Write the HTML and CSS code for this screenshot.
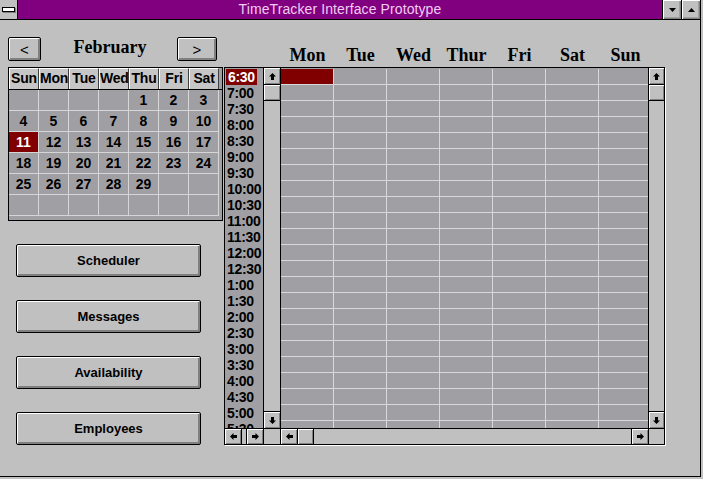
FILE: index.html
```html
<!DOCTYPE html>
<html>
<head>
<meta charset="utf-8">
<title>TimeTracker Interface Prototype</title>
<link rel="stylesheet" href="styles.css">
</head>
<body>
<div class="window">
  <div class="titlebar">
    <div class="sysbox"><span class="sysbar"></span></div>
    <div class="title">TimeTracker Interface Prototype</div>
    <div class="tbtn"><svg width="7" height="4" viewBox="0 0 7 4"><path d="M0 0H7L3.5 4Z"/></svg></div>
    <div class="tbtn"><svg width="7" height="4" viewBox="0 0 7 4"><path d="M0 4H7L3.5 0Z"/></svg></div>
  </div>
  <div class="client">
    <div class="leftcol">
      <div class="monthnav">
        <button class="navbtn prev">&lt;</button>
        <div class="month">February</div>
        <button class="navbtn next">&gt;</button>
      </div>
      <div class="cal">
        <div class="calhead"><span>Sun</span><span>Mon</span><span>Tue</span><span>Wed</span><span>Thu</span><span>Fri</span><span>Sat</span></div>
        <div class="calrow"><span></span><span></span><span></span><span></span><span>1</span><span>2</span><span>3</span></div>
        <div class="calrow"><span>4</span><span>5</span><span>6</span><span>7</span><span>8</span><span>9</span><span>10</span></div>
        <div class="calrow"><span class="sel">11</span><span>12</span><span>13</span><span>14</span><span>15</span><span>16</span><span>17</span></div>
        <div class="calrow"><span>18</span><span>19</span><span>20</span><span>21</span><span>22</span><span>23</span><span>24</span></div>
        <div class="calrow"><span>25</span><span>26</span><span>27</span><span>28</span><span>29</span><span></span><span></span></div>
        <div class="calrow"><span></span><span></span><span></span><span></span><span></span><span></span><span></span></div>
      </div>
      <div class="actions">
        <button class="pbtn">Scheduler</button>
        <button class="pbtn">Messages</button>
        <button class="pbtn">Availability</button>
        <button class="pbtn">Employees</button>
      </div>
    </div>
    <div class="rightcol">
      <div class="dayhead"><span>Mon</span><span>Tue</span><span>Wed</span><span>Thur</span><span>Fri</span><span>Sat</span><span>Sun</span></div>
      <div class="panel">
        <div class="times">
          <div class="t"><span class="on">6:30</span></div>
          <div class="t">7:00</div>
          <div class="t">7:30</div>
          <div class="t">8:00</div>
          <div class="t">8:30</div>
          <div class="t">9:00</div>
          <div class="t">9:30</div>
          <div class="t">10:00</div>
          <div class="t">10:30</div>
          <div class="t">11:00</div>
          <div class="t">11:30</div>
          <div class="t">12:00</div>
          <div class="t">12:30</div>
          <div class="t">1:00</div>
          <div class="t">1:30</div>
          <div class="t">2:00</div>
          <div class="t">2:30</div>
          <div class="t">3:00</div>
          <div class="t">3:30</div>
          <div class="t">4:00</div>
          <div class="t">4:30</div>
          <div class="t">5:00</div>
          <div class="t">5:30</div>
        </div>
        <div class="vscroll">
          <div class="sb up"><svg width="7" height="7" viewBox="0 0 7 7"><path d="M3.5 0L7 3.5H5V7H2V3.5H0Z"/></svg></div>
          <div class="sb thumb"></div>
          <div class="track"></div>
          <div class="sb down"><svg width="7" height="7" viewBox="0 0 7 7"><path d="M3.5 7L7 3.5H5V0H2V3.5H0Z"/></svg></div>
        </div>
        <div class="grid">
          <div class="gr"><i class="on"></i><i></i><i></i><i></i><i></i><i></i><i></i></div>
          <div class="gr"><i></i><i></i><i></i><i></i><i></i><i></i><i></i></div>
          <div class="gr"><i></i><i></i><i></i><i></i><i></i><i></i><i></i></div>
          <div class="gr"><i></i><i></i><i></i><i></i><i></i><i></i><i></i></div>
          <div class="gr"><i></i><i></i><i></i><i></i><i></i><i></i><i></i></div>
          <div class="gr"><i></i><i></i><i></i><i></i><i></i><i></i><i></i></div>
          <div class="gr"><i></i><i></i><i></i><i></i><i></i><i></i><i></i></div>
          <div class="gr"><i></i><i></i><i></i><i></i><i></i><i></i><i></i></div>
          <div class="gr"><i></i><i></i><i></i><i></i><i></i><i></i><i></i></div>
          <div class="gr"><i></i><i></i><i></i><i></i><i></i><i></i><i></i></div>
          <div class="gr"><i></i><i></i><i></i><i></i><i></i><i></i><i></i></div>
          <div class="gr"><i></i><i></i><i></i><i></i><i></i><i></i><i></i></div>
          <div class="gr"><i></i><i></i><i></i><i></i><i></i><i></i><i></i></div>
          <div class="gr"><i></i><i></i><i></i><i></i><i></i><i></i><i></i></div>
          <div class="gr"><i></i><i></i><i></i><i></i><i></i><i></i><i></i></div>
          <div class="gr"><i></i><i></i><i></i><i></i><i></i><i></i><i></i></div>
          <div class="gr"><i></i><i></i><i></i><i></i><i></i><i></i><i></i></div>
          <div class="gr"><i></i><i></i><i></i><i></i><i></i><i></i><i></i></div>
          <div class="gr"><i></i><i></i><i></i><i></i><i></i><i></i><i></i></div>
          <div class="gr"><i></i><i></i><i></i><i></i><i></i><i></i><i></i></div>
          <div class="gr"><i></i><i></i><i></i><i></i><i></i><i></i><i></i></div>
          <div class="gr"><i></i><i></i><i></i><i></i><i></i><i></i><i></i></div>
          <div class="gr"><i></i><i></i><i></i><i></i><i></i><i></i><i></i></div>
        </div>
        <div class="vscroll right">
          <div class="sb up"><svg width="7" height="7" viewBox="0 0 7 7"><path d="M3.5 0L7 3.5H5V7H2V3.5H0Z"/></svg></div>
          <div class="sb thumb"></div>
          <div class="track"></div>
          <div class="sb down"><svg width="7" height="7" viewBox="0 0 7 7"><path d="M3.5 7L7 3.5H5V0H2V3.5H0Z"/></svg></div>
        </div>
        <div class="hscroll">
          <div class="sb left"><svg width="7" height="7" viewBox="0 0 7 7"><path d="M0 3.5L3.5 0V2H7V5H3.5V7Z"/></svg></div>
          <div class="track"></div>
          <div class="sb rt"><svg width="7" height="7" viewBox="0 0 7 7"><path d="M7 3.5L3.5 0V2H0V5H3.5V7Z"/></svg></div>
        </div>
        <div class="corner mid"></div>
        <div class="hscroll">
          <div class="sb left"><svg width="7" height="7" viewBox="0 0 7 7"><path d="M0 3.5L3.5 0V2H7V5H3.5V7Z"/></svg></div>
          <div class="sb hthumb"></div>
          <div class="track"></div>
          <div class="sb rt"><svg width="7" height="7" viewBox="0 0 7 7"><path d="M7 3.5L3.5 0V2H0V5H3.5V7Z"/></svg></div>
        </div>
        <div class="corner end"></div>
      </div>
    </div>
  </div>
</div>
</body>
</html>
```
FILE: styles.css
```css
* { box-sizing: border-box; }
html, body { margin: 0; padding: 0; }
body {
  width: 703px;
  height: 479px;
  overflow: hidden;
  background: #c0c0c0;
  font-family: "Liberation Sans", Arial, sans-serif;
  color: #000;
}
.window {
  width: 701px;
  height: 477px;
  border-right: 1px solid #000;
  border-bottom: 1px solid #000;
  display: flex;
  flex-direction: column;
}

/* title bar */
.titlebar {
  height: 20px;
  flex: none;
  border-bottom: 1px solid #000;
  display: flex;
}
.sysbox {
  width: 18px;
  border-right: 1px solid #000;
  background: #c0c0c0;
  display: flex;
  align-items: center;
  justify-content: center;
}
.sysbar {
  width: 13px;
  height: 5px;
  background: #fff;
  border: 1px solid #000;
  box-shadow: 1px 1px 0 #808080;
}
.title {
  flex: 1;
  background: #800080;
  color: #f2cdf2;
  font-size: 14px;
  line-height: 19px;
  text-align: center;
  letter-spacing: 0.1px;
}
.tbtn {
  width: 19px;
  border-left: 1px solid #000;
  background: #c0c0c0;
  box-shadow: inset 1px 1px 0 #fff, inset -1px -1px 0 #808080, inset -2px -2px 0 #a0a0a0;
  display: flex;
  align-items: center;
  justify-content: center;
}
svg { display: block; fill: #000; }

/* client */
.client {
  flex: 1;
  display: flex;
}
.leftcol {
  width: 224px;
  flex: none;
  padding-left: 8px;
  padding-top: 17px;
}
.monthnav {
  display: flex;
  width: 209px;
  height: 24px;
}
.navbtn {
  height: 24px;
  margin: 0;
  padding: 0;
  border: 1px solid #000;
  border-radius: 2px;
  background: #c0c0c0;
  box-shadow: inset 1px 1px 0 #fff, inset -1px -1px 0 #808080, inset -2px -2px 0 #808080;
  font-family: "Liberation Sans", Arial, sans-serif;
  font-size: 15px;
  color: #000;
}
.navbtn.prev { width: 33px; }
.navbtn.next { width: 40px; }
.month {
  flex: 1;
  align-self: flex-start;
  text-align: center;
  font-family: "Liberation Serif", "Times New Roman", serif;
  font-weight: bold;
  font-size: 18px;
  line-height: 20px;
  padding-left: 2px;
}

/* calendar */
.cal {
  margin-top: 6px;
  width: 215px;
  height: 154px;
  border: 1px solid #000;
  background: #a0a0a4;
}
.calhead {
  display: flex;
  height: 22px;
  border-bottom: 1px solid #000;
}
.calhead span {
  width: 30px;
  height: 21px;
  background: #c6c6c6;
  border-top: 1px solid #fff;
  border-left: 1px solid #fff;
  border-right: 1px solid #404040;
  text-align: center;
  font-weight: bold;
  font-size: 14px;
  line-height: 19px;
  letter-spacing: -0.2px;
  white-space: nowrap;
  overflow: hidden;
}
.calrow {
  display: flex;
  height: 21px;
}
.calrow span {
  width: 30px;
  height: 21px;
  border-right: 1px solid #d6d6d6;
  border-bottom: 1px solid #d6d6d6;
  text-align: center;
  font-weight: bold;
  font-size: 14px;
  line-height: 20px;
}
.calrow span.sel {
  background: #800000;
  color: #fff;
}

/* push buttons */
.actions {
  margin-top: 23px;
  margin-left: 8px;
  display: flex;
  flex-direction: column;
  gap: 23px;
}
.pbtn {
  width: 185px;
  height: 33px;
  margin: 0;
  padding: 0;
  border: 1px solid #000;
  border-radius: 2px;
  background: #c0c0c0;
  box-shadow: inset 1px 1px 0 #fff, inset -1px -1px 0 #808080, inset -2px -2px 0 #808080;
  font-family: "Liberation Sans", Arial, sans-serif;
  font-weight: bold;
  font-size: 13px;
  color: #000;
}

/* scheduler */
.rightcol {
  width: 442px;
  flex: none;
  padding-top: 23px;
}
.dayhead {
  display: flex;
  height: 24px;
  padding-left: 57px;
}
.dayhead span {
  width: 53px;
  flex: none;
  text-align: center;
  font-family: "Liberation Serif", "Times New Roman", serif;
  font-weight: bold;
  font-size: 18px;
  line-height: 24px;
}
.panel {
  width: 441px;
  height: 378px;
  border: 1px solid #000;
  box-shadow: 1px 1px 0 #fff;
  display: grid;
  grid-template-columns: 38px 18px 367px 16px;
  grid-template-rows: 360px 16px;
}
.times {
  background: #a0a0a4;
  overflow: hidden;
  padding-top: 1px;
}
.t {
  height: 16px;
  line-height: 16px;
  padding-left: 2px;
  font-weight: bold;
  font-size: 14px;
  letter-spacing: -0.3px;
  white-space: nowrap;
}
.t .on {
  display: inline-block;
  margin-left: -1px;
  padding: 0 2px;
  height: 16px;
  background: #800000;
  color: #fff;
}
.vscroll {
  background: #c0c0c0;
  border-left: 1px solid #000;
  border-right: 1px solid #000;
  display: flex;
  flex-direction: column;
}
.vscroll.right { border-right: none; }
.sb {
  flex: none;
  background: #c0c0c0;
  box-shadow: inset 1px 1px 0 #fff, inset -1px -1px 0 #808080;
  display: flex;
  align-items: center;
  justify-content: center;
}
.vscroll .up { height: 17px; border-bottom: 1px solid #000; }
.vscroll .thumb { height: 16px; border-bottom: 1px solid #000; }
.vscroll .down { height: 17px; border-top: 1px solid #000; }
.track { flex: 1; background: #c0c0c0; }
.grid {
  background: #a0a0a4;
  overflow: hidden;
  padding-top: 1px;
}
.gr {
  display: flex;
  height: 16px;
}
.gr i {
  flex: none;
  width: 53px;
  height: 16px;
  border-right: 1px solid #d8d8d8;
  border-bottom: 1px solid #d8d8d8;
}
.gr i.on { background: #800000; }
.hscroll {
  border-top: 1px solid #000;
  display: flex;
  background: #c0c0c0;
}
.hscroll .left { width: 17px; border-right: 1px solid #000; }
.hscroll .rt { width: 17px; border-left: 1px solid #000; }
.hscroll .hthumb { width: 16px; border-right: 1px solid #000; }
.corner {
  border-top: 1px solid #000;
  background: #c0c0c0;
}
.corner.mid {
  border-left: 1px solid #000;
  border-right: 1px solid #000;
}
.corner.end { border-left: 1px solid #000; }
```
